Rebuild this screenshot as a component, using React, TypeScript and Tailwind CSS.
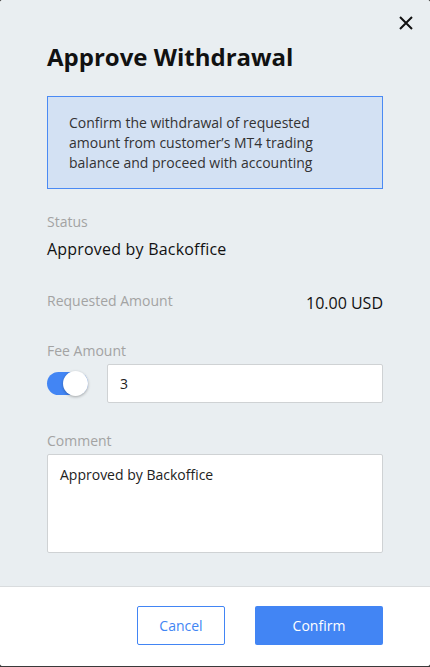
import React from "react";

export default function App() {
  return (
    <div className="min-h-[667px] w-[430px] bg-[#3a3a3a]" style={{ fontFamily: '"Open Sans", "Liberation Sans", sans-serif' }}>
      <div className="relative flex h-[666px] w-[430px] flex-col overflow-hidden rounded-[3px] bg-white">
        <div className="relative flex-1 bg-[#e9eef1] px-[47px] pt-[41px]">
          <button className="absolute right-[17px] top-[16px] flex h-[14px] w-[14px] items-center justify-center" aria-label="Close">
            <svg width="14" height="14" viewBox="0 0 14 14">
              <path d="M1 1L13 13M13 1L1 13" stroke="#111" strokeWidth="2" />
            </svg>
          </button>
          <h2 className="text-[24px] font-bold leading-[32px] text-[#111]">Approve Withdrawal</h2>
          <div className="mt-[23px] border border-[#4a8af4] bg-[#d3e1f3] px-[21px] pb-[15px] pt-[16px] text-[14px] leading-[20px] text-[#333]">
            Confirm the withdrawal of requested amount from customer’s MT4 trading balance and proceed with accounting
          </div>
          <div className="mt-[23px] text-[14px] leading-[20px] text-[#a3a3a3]">Status</div>
          <div className="mt-[6px] text-[16px] font-medium leading-[22px] tracking-[0.2px] text-[#111]">Approved by Backoffice</div>
          <div className="mt-[31px] flex items-start justify-between">
            <span className="text-[14px] leading-[20px] text-[#a3a3a3]">Requested Amount</span>
            <span className="mt-[1px] text-[16px] font-medium leading-[22px] text-[#111]">10.00 USD</span>
          </div>
          <div className="mt-[27px] text-[14px] leading-[20px] text-[#a3a3a3]">Fee Amount</div>
          <div className="mt-[3px] flex items-center gap-[19px]">
            <div className="relative h-[23px] w-[41px] shrink-0 rounded-full bg-[#4285f4]">
              <div className="absolute right-0 top-[-1px] h-[25px] w-[25px] rounded-full bg-white shadow-[0_1px_3px_rgba(0,0,0,0.3)]" />
            </div>
            <div className="flex h-[39px] flex-1 items-center rounded-[2px] border border-[#cfd2d4] bg-white px-[12px] text-[14px] text-[#222]">3</div>
          </div>
          <div className="mt-[28px] text-[14px] leading-[20px] text-[#a3a3a3]">Comment</div>
          <div className="mt-[3px] h-[99px] rounded-[2px] border border-[#cfd2d4] bg-white px-[12px] pt-[10px] text-[14px] leading-[20px] text-[#222]">
            Approved by Backoffice
          </div>
        </div>
        <div className="flex h-[80px] items-start justify-end gap-[30px] border-t border-[#d9dcde] bg-white pr-[47px] pt-[19px]">
          <button className="h-[39px] w-[88px] rounded-[2px] border border-[#4285f4] bg-white text-[14px] text-[#4285f4]">Cancel</button>
          <button className="h-[39px] w-[128px] rounded-[2px] bg-[#4285f4] text-[14px] font-medium text-white">Confirm</button>
        </div>
      </div>
    </div>
  );
}
